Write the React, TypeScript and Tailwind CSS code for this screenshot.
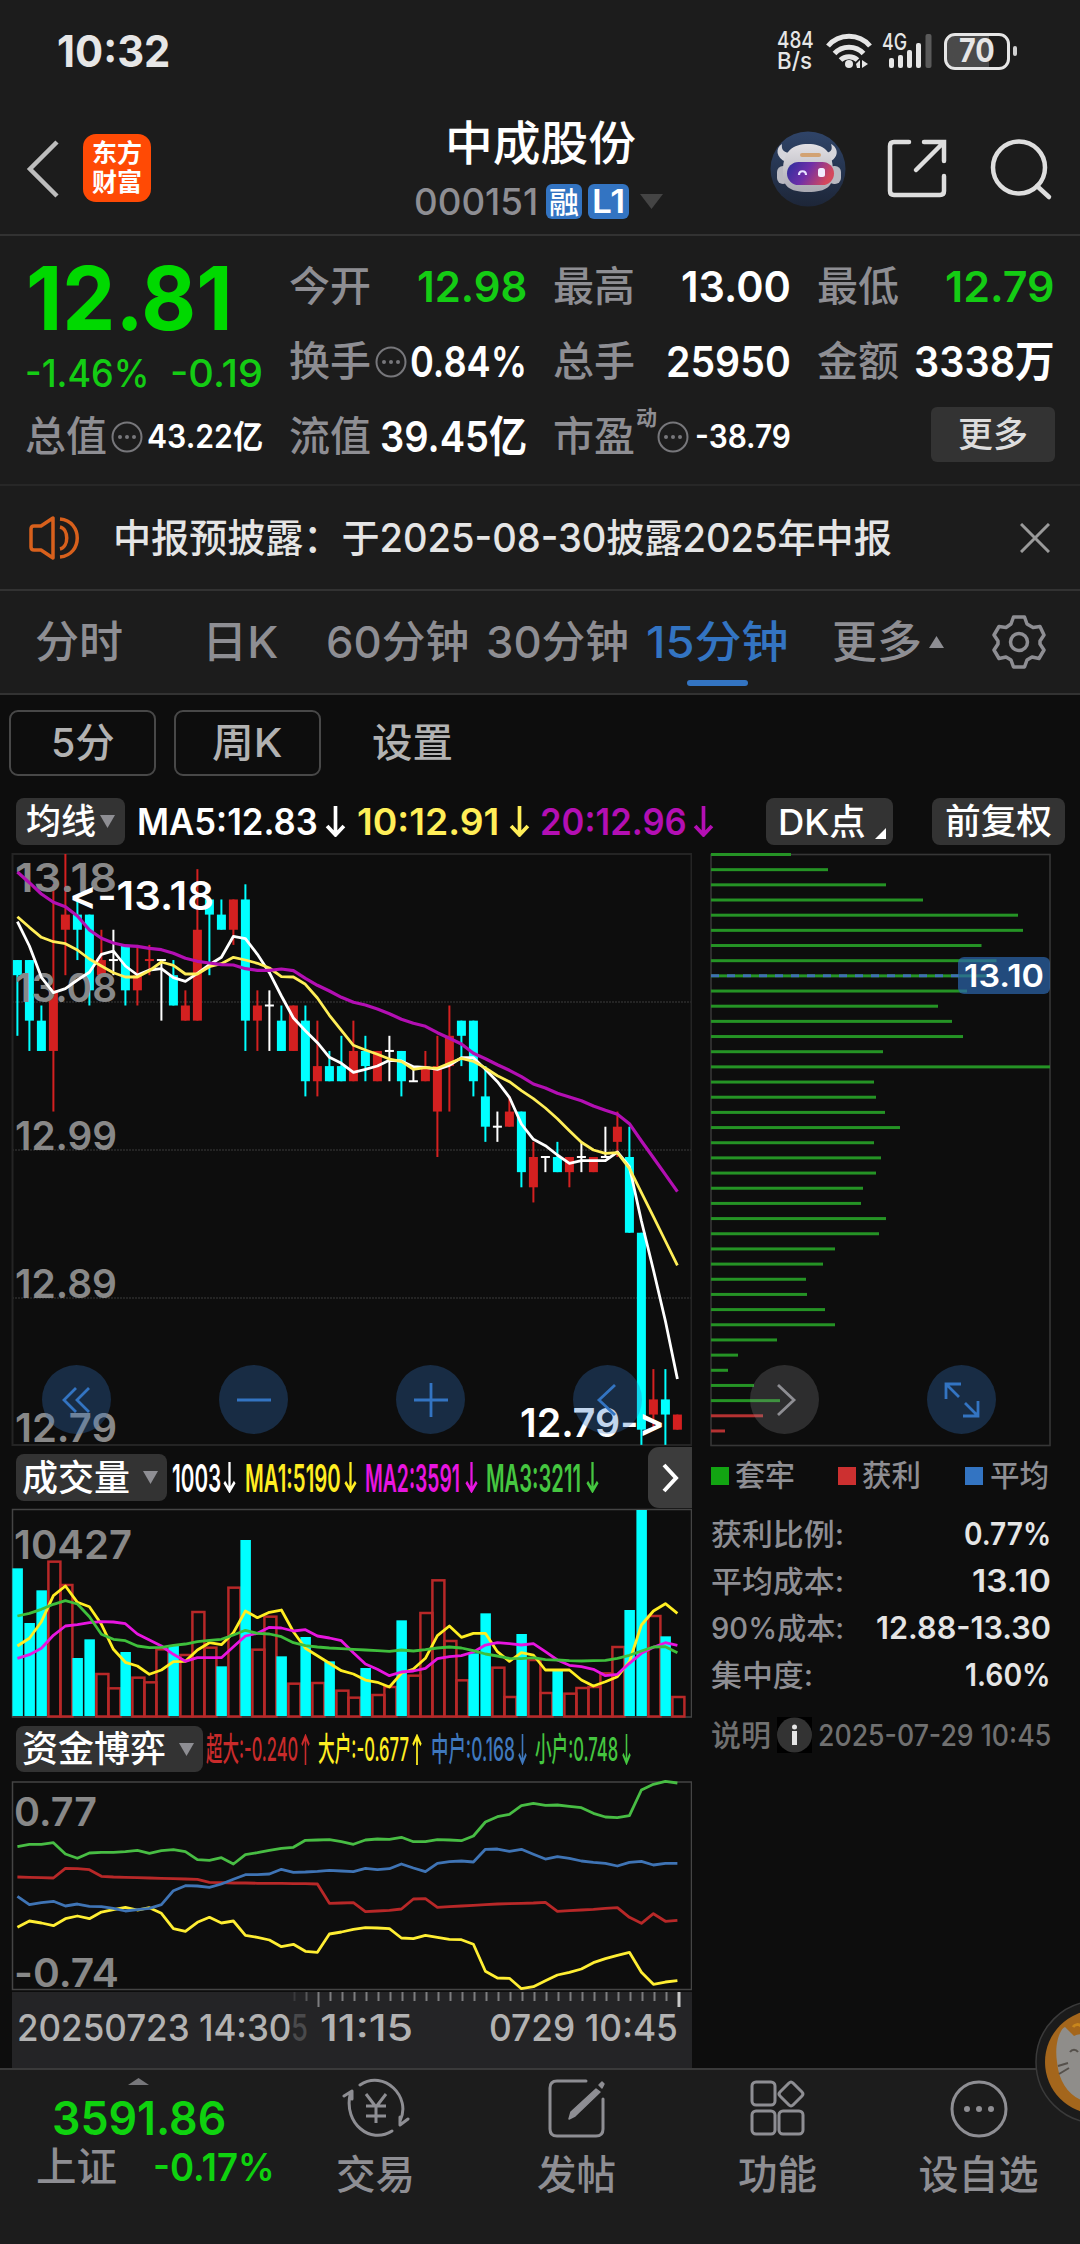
import React, { useLayoutEffect, useRef } from 'react';

interface FitProps {
  className: string;
  children: React.ReactNode;
}

// Single line of text condensed or widened to fill the width given in className
function Fit({ className, children }: FitProps) {
  const outer = useRef<HTMLSpanElement>(null);
  const inner = useRef<HTMLSpanElement>(null);

  useLayoutEffect(() => {
    if (!outer.current || !inner.current) return;
    const ratio = outer.current.clientWidth / inner.current.offsetWidth;
    inner.current.style.transform = `scaleX(${ratio})`;
  }, []);

  return (
    <span className={`block shrink-0 leading-none whitespace-nowrap ${className}`}>
      <span ref={inner} className="inline-block origin-left align-top">
        {children}
      </span>
      <span ref={outer} className="block h-0 w-full" />
    </span>
  );
}

type Candle = [string, number, number, number, number];

// colour, body top, body bottom, wick top, wick bottom (in cents below 13.18)
const candles: Candle[] = [
  ['c', 7, 8, 7, 12], ['c', 7, 11, 7, 13], ['c', 11, 13, 10, 13], ['r', 9, 13, 2, 17],
  ['r', 4, 5, 0, 8], ['c', 4, 5, 3, 7], ['c', 4, 9, 4, 10], ['r', 7, 8, 5, 8],
  ['w', 7, 7, 5, 8], ['c', 6, 9, 6, 10], ['r', 8, 9, 6, 10], ['r', 7, 7, 6, 8],
  ['w', 7, 7, 7, 11], ['c', 8, 10, 7, 10], ['r', 10, 11, 9, 11], ['r', 5, 11, 1, 11],
  ['c', 3, 4, 3, 8], ['c', 4, 5, 3, 5], ['r', 3, 5, 3, 6], ['c', 3, 11, 2, 13],
  ['r', 10, 11, 9, 13], ['w', 10, 10, 9, 13], ['c', 11, 13, 10, 13], ['r', 10, 13, 10, 13],
  ['c', 11, 15, 10, 16], ['r', 14, 15, 11, 16], ['c', 14, 15, 13, 15], ['c', 14, 15, 12, 15],
  ['r', 13, 15, 11, 15], ['c', 13, 14, 12, 15], ['r', 13, 15, 13, 15], ['w', 13, 13, 12, 15],
  ['c', 13, 15, 13, 16], ['w', 15, 15, 14, 15], ['r', 14, 15, 13, 15], ['r', 14, 17, 12, 20],
  ['r', 12, 14, 10, 17], ['c', 11, 12, 11, 14], ['c', 11, 15, 11, 16], ['c', 16, 18, 14, 19],
  ['w', 18, 18, 17, 19], ['r', 17, 18, 16, 18], ['c', 17, 21, 17, 22], ['r', 20, 22, 19, 23],
  ['w', 20, 20, 20, 21], ['c', 20, 21, 19, 21], ['r', 20, 21, 20, 22], ['w', 20, 20, 19, 21],
  ['r', 20, 21, 20, 21], ['w', 20, 20, 18, 20], ['r', 18, 19, 17, 20], ['c', 20, 25, 18, 25],
  ['c', 25, 38, 25, 39], ['r', 36, 37, 34, 38], ['c', 36, 37, 34, 39], ['r', 37, 38, 37, 38],
];

const candleColors: Record<string, string> = { c: '#00ffff', r: '#d42020', w: '#ffffff' };

const ma5 = [
  245, 318, 412, 458, 446, 420, 397, 343, 333, 378, 405, 390, 386, 413, 424, 400, 374, 352, 289, 296,
  343, 398, 468, 534, 572, 608, 652, 670, 697, 688, 678, 661, 663, 680, 682, 688, 676, 653, 653, 688,
  725, 772, 852, 898, 917, 945, 970, 962, 962, 962, 936, 980, 1143, 1290, 1443, 1617,
];
const ma10 = [
  230, 262, 292, 305, 311, 330, 357, 378, 398, 411, 411, 392, 366, 376, 402, 402, 380, 371, 352, 360,
  370, 384, 410, 411, 433, 474, 526, 571, 616, 630, 643, 657, 664, 688, 683, 685, 670, 655, 664, 684,
  707, 725, 752, 776, 804, 836, 872, 907, 930, 940, 938, 985, 1058, 1130, 1203, 1276,
];
const ma20 = [
  96, 128, 162, 187, 200, 228, 270, 295, 309, 317, 319, 325, 329, 340, 355, 364, 369, 374, 375, 386,
  391, 391, 387, 392, 415, 436, 453, 472, 487, 495, 507, 521, 538, 550, 559, 578, 595, 612, 640, 656,
  674, 691, 710, 732, 744, 760, 771, 782, 798, 811, 823, 851, 903, 953, 1004, 1055,
];

const chips = [
  80, 117, 175, 212, 307, 312, 270.5, 285.5, 277, 256, 227, 241, 252, 172, 339, 163, 165, 174, 189, 163,
  170, 165, 152, 150, 175, 168, 124, 112, 95, 96, 114, 124, 66, 27, 17, 43, 69, 52, 14,
];

const volumes: [string, number][] = [
  ['c', 385], ['c', 549], ['c', 451], ['r', 362], ['r', 432], ['c', 654], ['c', 598], ['r', 699],
  ['r', 742], ['c', 636], ['r', 710], ['r', 724], ['r', 625], ['c', 617], ['r', 642], ['r', 513],
  ['r', 620], ['c', 679], ['r', 440], ['c', 300], ['r', 626], ['r', 527], ['c', 649], ['r', 728],
  ['c', 591], ['r', 726], ['c', 664], ['r', 749], ['r', 770], ['c', 684], ['r', 762], ['r', 738],
  ['c', 541], ['r', 704], ['r', 516], ['r', 418], ['r', 600], ['r', 718], ['c', 640], ['c', 520],
  ['r', 680], ['r', 768], ['c', 582], ['r', 657], ['r', 756], ['c', 690], ['r', 758], ['r', 741],
  ['r', 738], ['r', 697], ['r', 618], ['c', 510], ['c', 210], ['r', 525], ['c', 589], ['r', 768],
];
const volMa1 = [
  618, 595, 545, 467, 438, 487, 500, 553, 628, 667, 678, 703, 690, 665, 664, 630, 608, 614, 578, 513,
  533, 517, 510, 575, 625, 647, 670, 692, 702, 720, 727, 741, 700, 687, 655, 587, 558, 592, 580, 580,
  635, 664, 638, 645, 690, 690, 690, 720, 738, 725, 710, 665, 555, 513, 491, 520,
];
const volMa2 = [
  655, 644, 625, 586, 558, 554, 548, 545, 546, 551, 582, 600, 618, 643, 664, 653, 653, 653, 620, 588,
  580, 562, 564, 573, 569, 588, 594, 602, 638, 672, 688, 707, 696, 693, 685, 656, 650, 647, 636, 615,
  608, 611, 615, 611, 635, 660, 676, 680, 688, 707, 703, 670, 640, 622, 608, 616,
];
const volMa3 = [
  528, 520, 508, 493, 482, 492, 530, 583, 598, 602, 618, 623, 622, 616, 612, 605, 601, 598, 585, 571,
  580, 582, 590, 608, 617, 621, 624, 626, 628, 630, 632, 634, 630, 633, 629, 624, 621, 624, 632, 642,
  648, 655, 656, 653, 659, 660, 662, 663, 662, 661, 655, 646, 633, 621, 620, 638,
];

const fundSmall = [
  380, 373, 373, 368, 402, 415, 399, 397, 397, 395, 391, 400, 392, 389, 395, 419, 421, 413, 432, 404,
  398, 391, 385, 382, 361, 360, 359, 365, 373, 360, 357, 358, 352, 365, 365, 359, 360, 362, 348, 306,
  290, 283, 257, 250, 256, 255, 259, 263, 280, 291, 293, 287, 210, 193, 184, 189,
];
const fundMid = [
  529, 554, 548, 544, 558, 552, 559, 560, 565, 573, 569, 565, 554, 512, 497, 498, 502, 492, 478, 464,
  464, 462, 448, 457, 456, 454, 451, 453, 455, 445, 449, 446, 432, 444, 455, 430, 425, 423, 426, 388,
  387, 394, 388, 403, 417, 410, 415, 423, 427, 430, 438, 427, 424, 435, 430, 430,
];
const fundHuge = [
  471, 472, 473, 474, 445, 446, 449, 469, 471, 472, 473, 474, 475, 476, 477, 478, 487, 488, 489, 489,
  490, 490, 490, 491, 491, 492, 550, 549, 548, 575, 573, 571, 567, 537, 536, 562, 560, 558, 556, 554,
  552, 551, 550, 549, 547, 574, 572, 570, 568, 565, 563, 592, 610, 581, 604, 601,
];
const fundBig = [
  622, 603, 609, 617, 596, 588, 596, 576, 569, 562, 570, 563, 580, 626, 634, 607, 592, 609, 603, 646,
  652, 660, 680, 673, 694, 697, 642, 636, 628, 623, 624, 626, 654, 656, 646, 652, 658, 659, 673, 754,
  774, 775, 806, 800, 782, 765, 757, 747, 728, 716, 706, 697, 757, 793, 786, 782,
];

const candleX = (i: number) => 17.4 + i * 12;
const candleY = (n: number) => 854 + n * 15.15;
const toPoints = (values: number[], base: number) =>
  values.map((v, i) => `${candleX(i).toFixed(1)},${(base + v / 3).toFixed(1)}`).join(' ');

function Line({ values, base, color, width = 2.8 }: { values: number[]; base: number; color: string; width?: number }) {
  return <polyline points={toPoints(values, base)} fill="none" stroke={color} strokeWidth={width} strokeLinejoin="round" />;
}

interface ChartLabelProps {
  x: number;
  y: number;
  w: number;
  fill?: string;
  children: string;
}

function ChartLabel({ x, y, w, fill = '#888888', children }: ChartLabelProps) {
  return (
    <text
      className="[font-feature-settings:'calt'_0]"
      x={x}
      y={y}
      textLength={w}
      lengthAdjust="spacingAndGlyphs"
      fontSize="40"
      fontWeight="600"
      fill={fill}
    >
      {children}
    </text>
  );
}

function StatusBar() {
  return (
    <div className="flex h-[102px] items-center pl-[57px] text-[#e6e6e6]">
      <Fit className="w-[113px] text-[44px] font-bold">10:32</Fit>
      <div className="ml-[607px] w-[36px] pb-[1px]">
        <Fit className="w-[37px] text-[23px] font-medium">484</Fit>
        <Fit className="-mt-[2px] w-[35px] text-[23px] font-medium">B/s</Fit>
      </div>
      <svg className="ml-[13px] h-[37px] w-[47px]" viewBox="0 0 47 37" fill="none" stroke="#e6e6e6" strokeWidth="5">
        <path d="M2 13C13 0 33 0 44 13" />
        <path d="M8.500 20.500C16 12 30 12 37.500 20.500" />
        <path d="M14.500 27C19 22.500 27 22.500 31.500 27" />
        <circle cx="23" cy="31" r="4" fill="#e6e6e6" stroke="none" />
        <path d="M30 31l4-4v8h-3zM36 27v8l6-4z" fill="#e6e6e6" stroke="none" />
      </svg>
      <svg className="ml-[9px] h-[37px] w-[51px] overflow-visible" viewBox="0 0 51 37" fill="#e6e6e6">
        <text x="0" y="17" fontSize="23" fontWeight="500" textLength="25" lengthAdjust="spacingAndGlyphs">4G</text>
        <rect x="7" y="25" width="5" height="10" rx="2" />
        <rect x="16" y="22" width="5" height="13" rx="2" />
        <rect x="25" y="17" width="5" height="18" rx="2" />
        <rect x="34" y="10" width="5" height="25" rx="2" />
        <rect x="43.500" y="1" width="6" height="34" rx="2" fill="#5a5a5a" />
      </svg>
      <div className="ml-[11px] flex h-[37px] w-[66px] items-center justify-center rounded-[11px] border-[3px] border-[#e6e6e6] bg-linear-to-r from-[#4a4a4a] from-70% to-[#1c1c1c] to-70%">
        <Fit className="w-[36px] text-[32px] font-bold">70</Fit>
      </div>
      <div className="ml-[3px] h-[10px] w-[4px] rounded-full bg-[#d0d0d0]" />
    </div>
  );
}

function Robot() {
  return (
    <svg className="h-[76px] w-[76px]" viewBox="0 0 76 76">
      <defs>
        <linearGradient id="disc" x1="0" y1="0" x2="0" y2="1">
          <stop offset="0" stopColor="#2f4468" />
          <stop offset="1" stopColor="#1d2638" />
        </linearGradient>
        <linearGradient id="visor" x1="0" y1="0" x2="1" y2="0.300">
          <stop offset="0" stopColor="#2b2f9c" />
          <stop offset="0.500" stopColor="#6f2fa8" />
          <stop offset="1" stopColor="#d4485c" />
        </linearGradient>
        <linearGradient id="shell" x1="0" y1="0" x2="0" y2="1">
          <stop offset="0" stopColor="#e2e0e4" />
          <stop offset="1" stopColor="#a9a9b2" />
        </linearGradient>
      </defs>
      <circle cx="38" cy="38" r="37.500" fill="url(#disc)" />
      <rect x="7" y="35" width="12" height="18" rx="6" fill="#b9b9c1" />
      <rect x="58" y="35" width="13" height="18" rx="6" fill="#b9b9c1" />
      <path d="M12 13C5 17 6 27 16 31L22 22C14 22 11 19 12 13zM61 13C69 17 69 27 59 31L53 22C61 22 63 19 61 13z" fill="#d5d5db" />
      <path d="M13 40C13 20 23 13 38 13S63 20 63 40C64 55 57 61 38 61S12 55 13 40z" fill="url(#shell)" />
      <rect x="17" y="31" width="47" height="23" rx="11.500" fill="url(#visor)" />
      <rect x="30" y="22" width="21" height="4" rx="2" fill="#d2a273" />
      <path d="M29 44C29 39 36 39 36 44" fill="none" stroke="#e8e4ff" strokeWidth="2.200" />
      <rect x="48" y="37" width="7" height="9" rx="2.500" fill="#f2ecff" />
    </svg>
  );
}

function Header() {
  return (
    <header className="flex h-[134px] items-start border-b-2 border-[#323232] pl-[26px]">
      <svg className="mt-[38px] h-[58px] w-[34px]" viewBox="0 0 34 58" fill="none" stroke="#bdbdbd" strokeWidth="4.500">
        <path d="M31 2L4 29L31 56" />
      </svg>
      <div className="mt-[32px] ml-[23px] flex h-[68px] w-[68px] flex-col items-center justify-center rounded-[13px] bg-[#ff4a05] text-[25px] leading-[29px] font-bold text-white">
        <span>东方</span>
        <span>财富</span>
      </div>
      <div className="ml-[263px] w-[250px] pt-[17px]">
        <Fit className="ml-[31px] w-[191px] text-[47px] font-medium text-white">中成股份</Fit>
        <div className="mt-[17px] flex h-[37px] items-center">
          <Fit className="w-[124px] text-[37px] text-[#8e8e93]">000151</Fit>
          <span className="ml-[8px] flex h-[35px] w-[36px] items-center justify-center rounded-[6px] bg-[#3374c2]">
            <Fit className="w-[30px] text-[30px] font-medium text-white">融</Fit>
          </span>
          <span className="ml-[6px] flex h-[35px] w-[41px] items-center justify-center rounded-[6px] bg-[#3374c2]">
            <Fit className="w-[33px] text-[32px] font-semibold text-white">L1</Fit>
          </span>
          <svg className="ml-[11px] h-[15px] w-[23px]" viewBox="0 0 23 15" fill="#444444">
            <path d="M0 0H23L11.500 15z" />
          </svg>
        </div>
      </div>
      <div className="mt-[29px] ml-[106px]">
        <Robot />
      </div>
      <svg className="mt-[37px] ml-[41px] h-[60px] w-[60px]" viewBox="0 0 60 60" fill="none" stroke="#dedede" strokeWidth="4.500" strokeLinecap="round">
        <path d="M22 3H7Q3 3 3 7V52Q3 56 7 56H53Q57 56 57 52V37" />
        <path d="M37 3H57V22M55 5L29 31" />
      </svg>
      <svg className="mt-[37px] ml-[43px] h-[62px] w-[64px]" viewBox="0 0 64 62" fill="none" stroke="#dedede" strokeWidth="4.500" strokeLinecap="round">
        <circle cx="29" cy="28.500" r="26" />
        <path d="M47 47L59 58" />
      </svg>
    </header>
  );
}

function Dots() {
  return (
    <svg className="h-[32px] w-[32px] shrink-0" viewBox="0 0 32 32" fill="#77777b">
      <circle cx="16" cy="16" r="14.500" fill="none" stroke="#77777b" strokeWidth="2" />
      <circle cx="9" cy="16" r="2" />
      <circle cx="16" cy="16" r="2" />
      <circle cx="23" cy="16" r="2" />
    </svg>
  );
}

function Cell({ children }: { children: React.ReactNode }) {
  return <div className="flex h-[75px] items-center justify-between text-[43px] font-semibold text-white">{children}</div>;
}

function Label({ children }: { children: React.ReactNode }) {
  return <Fit className="w-[82px] text-[41px] font-medium text-[#8e8e93]">{children}</Fit>;
}

function Quote() {
  return (
    <section className="grid h-[250px] grid-cols-[238px_238px_238px_238px] gap-x-[26px] border-b-2 border-[#272727] pt-[13px] pl-[25px]">
      <div>
        <div className="flex h-[97px] items-center pl-[1px]">
          <Fit className="w-[207px] text-[88px] font-bold text-[#00d900]">12.81</Fit>
        </div>
        <div className="flex h-[53px] items-center justify-between text-[38px] text-[#14cc14]">
          <Fit className="w-[124px]">-1.46%</Fit>
          <Fit className="w-[93px]">-0.19</Fit>
        </div>
        <Cell>
          <Label>总值</Label>
          <Dots />
          <Fit className="w-[116px] text-[32px]">43.22亿</Fit>
        </Cell>
      </div>
      <div>
        <Cell>
          <Label>今开</Label>
          <Fit className="w-[110px] text-[#14cc14]">12.98</Fit>
        </Cell>
        <Cell>
          <Label>换手</Label>
          <Dots />
          <Fit className="w-[117px]">0.84%</Fit>
        </Cell>
        <Cell>
          <Label>流值</Label>
          <Fit className="w-[147px]">39.45亿</Fit>
        </Cell>
      </div>
      <div>
        <Cell>
          <Label>最高</Label>
          <Fit className="w-[110px]">13.00</Fit>
        </Cell>
        <Cell>
          <Label>总手</Label>
          <Fit className="w-[125px]">25950</Fit>
        </Cell>
        <Cell>
          <div className="flex items-center">
            <Label>市盈</Label>
            <Fit className="mb-[38px] ml-[1px] w-[21px] text-[21px] text-[#8e8e93]">动</Fit>
            <Dots />
          </div>
          <Fit className="w-[96px] text-[32px]">-38.79</Fit>
        </Cell>
      </div>
      <div>
        <Cell>
          <Label>最低</Label>
          <Fit className="w-[110px] text-[#14cc14]">12.79</Fit>
        </Cell>
        <Cell>
          <Label>金额</Label>
          <Fit className="w-[141px]">3338万</Fit>
        </Cell>
        <div className="mt-[8px] ml-auto flex h-[55px] w-[124px] items-center justify-center rounded-[6px] bg-[#333333]">
          <Fit className="w-[70px] text-[35px] font-medium text-[#dddddd]">更多</Fit>
        </div>
      </div>
    </section>
  );
}

function Notice() {
  return (
    <section className="flex h-[105px] items-center border-b-2 border-[#323232] pl-[29px]">
      <svg className="h-[44px] w-[52px]" viewBox="0 0 52 44" fill="none" stroke="#d8601c" strokeWidth="3.500" strokeLinejoin="round">
        <path d="M24 2V42L12 34H5Q2 34 2 31V13Q2 10 5 10H12z" />
        <path d="M31 11C40 13 40 31 31 33" />
        <path d="M31 3C54 5 54 39 31 41" />
      </svg>
      <Fit className="ml-[32px] w-[779px] text-[39px] font-medium text-[#e5e5e5]">中报预披露：于2025-08-30披露2025年中报</Fit>
      <svg className="ml-[128px] h-[30px] w-[30px]" viewBox="0 0 30 30" stroke="#9a9a9a" strokeWidth="3">
        <path d="M1 1L29 29M29 1L1 29" />
      </svg>
    </section>
  );
}

function Gear() {
  return (
    <svg className="h-[54px] w-[54px]" viewBox="0 0 54 54" fill="none" stroke="#8e8e93" strokeWidth="3.500" strokeLinejoin="round">
      <path d="M21.500 2H32.500L35 9L41 12.500L48 11.500L52 20L48 26V29L52 35L47 43.500L40 42L35 45L32.500 52H21.500L19 45L14 42L7 43.500L2 35L6 29V26L2 20L7 11.500L14 12.500L19 9z" />
      <circle cx="27" cy="27" r="8.500" />
    </svg>
  );
}

function Tabs() {
  return (
    <nav className="flex h-[104px] items-center border-b-2 border-[#323232] pl-[35px] text-[44px] text-[#8e8e93]">
      <Fit className="w-[88px]">分时</Fit>
      <Fit className="ml-[79px] w-[76px]">日K</Fit>
      <Fit className="ml-[48px] w-[143px]">60分钟</Fit>
      <Fit className="ml-[17px] w-[143px]">30分钟</Fit>
      <div className="relative ml-[17px] text-[#3374c2]">
        <Fit className="w-[142px]">15分钟</Fit>
        <span className="absolute top-[60px] left-[41px] h-[6px] w-[61px] rounded-full bg-[#3374c2]" />
      </div>
      <Fit className="ml-[44px] w-[90px]">更多</Fit>
      <svg className="ml-[7px] h-[12px] w-[15px]" viewBox="0 0 15 12" fill="#8e8e93">
        <path d="M0 12H15L7.500 0z" />
      </svg>
      <div className="ml-[48px]">
        <Gear />
      </div>
    </nav>
  );
}

function Periods() {
  return (
    <div className="flex items-center pt-[15px] pl-[9px] text-[40px] text-[#b2b2b2]">
      <div className="flex h-[66px] w-[147px] items-center justify-center rounded-[9px] border-2 border-[#484848]">
        <Fit className="w-[64px]">5分</Fit>
      </div>
      <div className="ml-[18px] flex h-[66px] w-[147px] items-center justify-center rounded-[9px] border-2 border-[#484848]">
        <Fit className="w-[71px]">周K</Fit>
      </div>
      <Fit className="ml-[51px] w-[81px]">设置</Fit>
    </div>
  );
}

function Down({ className }: { className: string }) {
  return (
    <svg className={`h-[13px] w-[15px] ${className}`} viewBox="0 0 15 13" fill="#8e8e93">
      <path d="M0 0H15L7.500 13z" />
    </svg>
  );
}

// Thin arrow behind every indicator value
function Arrow({ up = false, className }: { up?: boolean; className: string }) {
  return (
    <svg className={`h-[31px] ${className}`} viewBox="0 0 20 31" preserveAspectRatio="none" fill="none" stroke="currentColor" strokeWidth="3.500">
      {up ? <path d="M10 31V2M2 11L10 2L18 11" /> : <path d="M10 0V29M2 20L10 29L18 20" />}
    </svg>
  );
}

function MaRow() {
  return (
    <div className="mt-[22px] flex h-[47px] items-center pl-[16px] text-[37px] font-semibold">
      <div className="flex h-[47px] w-[109px] items-center rounded-[8px] bg-[#333333] pl-[10px]">
        <Fit className="w-[70px] text-[35px] font-medium text-white">均线</Fit>
        <Down className="ml-[4px]" />
      </div>
      <Fit className="ml-[12px] w-[181px] text-white">MA5:12.83</Fit>
      <Arrow className="ml-[7px] w-[21px] text-white" />
      <Fit className="ml-[11px] w-[142px] text-[#ffee58]">10:12.91</Fit>
      <Arrow className="ml-[10px] w-[21px] text-[#ffee58]" />
      <Fit className="ml-[10px] w-[147px] text-[#b30fb3]">20:12.96</Fit>
      <Arrow className="ml-[6px] w-[21px] text-[#b30fb3]" />
      <div className="ml-[52px] flex h-[47px] w-[127px] items-center rounded-[8px] bg-[#333333] pl-[12px] text-white">
        <Fit className="w-[88px] text-[36px] font-medium">DK点</Fit>
        <svg className="mt-[24px] ml-[9px] h-[11px] w-[11px]" viewBox="0 0 11 11" fill="#ffffff">
          <path d="M11 0V11H0z" />
        </svg>
      </div>
      <div className="ml-[39px] flex h-[47px] w-[133px] items-center justify-center rounded-[8px] bg-[#333333]">
        <Fit className="w-[107px] text-[35px] font-medium text-white">前复权</Fit>
      </div>
    </div>
  );
}

function CircleButton({ gray = false, d }: { gray?: boolean; d: string }) {
  return (
    <span className={`flex h-[69px] w-[69px] shrink-0 items-center justify-center rounded-full ${gray ? 'bg-[#8e8e93]/25' : 'bg-[#3374c2]/30'}`}>
      <svg className="h-[36px] w-[36px]" viewBox="0 0 36 36" fill="none" stroke={gray ? '#8e8e93' : '#3374c2'} strokeWidth="2.800">
        <path d={d} />
      </svg>
    </span>
  );
}

function CandleChart() {
  return (
    <svg className="h-[594px] w-[692px]" viewBox="0 853 692 594">
      <rect x="12.500" y="854" width="679" height="591" fill="none" stroke="#242424" strokeWidth="2" />
      {[1002, 1150, 1298].map((y) => (
        <path key={y} d={`M12 ${y}H692`} stroke="#242424" strokeWidth="2" strokeDasharray="2 1" />
      ))}
      {candles.map(([kind, top, bottom, high, low], i) => {
        const x = candleX(i);
        const color = candleColors[kind];
        const flat = top === bottom;
        return (
          <g key={i} fill={color}>
            <rect x={x - 1} y={candleY(high)} width="2" height={(low - high) * 15.15} />
            <rect
              x={x - 4.5}
              y={flat ? candleY(top) - 1 : candleY(top)}
              width="9"
              height={flat ? 2 : (bottom - top) * 15.15}
            />
          </g>
        );
      })}
      <ChartLabel x={15} y={892} w={102}>13.18</ChartLabel>
      <ChartLabel x={15} y={1002} w={102}>13.08</ChartLabel>
      <ChartLabel x={15} y={1150} w={102}>12.99</ChartLabel>
      <ChartLabel x={15} y={1298} w={102}>12.89</ChartLabel>
      <ChartLabel x={15} y={1442} w={102}>12.79</ChartLabel>
      <Line values={ma5} base={840} color="#ffffff" />
      <Line values={ma10} base={840} color="#ffee58" />
      <Line values={ma20} base={840} color="#b30fb3" width={3.2} />
      <ChartLabel x={69} y={910} w={145} fill="#ffffff">{'<-13.18'}</ChartLabel>
      <ChartLabel x={520} y={1437} w={145} fill="#ffffff">{'12.79->'}</ChartLabel>
    </svg>
  );
}

function ChipChart() {
  return (
    <svg className="h-[594px] w-[342px]" viewBox="710 853 342 594">
      <rect x="711" y="854.500" width="339" height="591" fill="none" stroke="#363636" strokeWidth="1.600" />
      {chips.map((w, i) => (
        <rect key={i} x="711" y={853 + i * 15.17} width={w} height="3" fill={i > 36 ? '#b53232' : '#259325'} />
      ))}
      <path d="M711 975.800H960" stroke="#3f6fb4" strokeWidth="3" strokeDasharray="8 8" />
      <rect x="958" y="957" width="92" height="37" rx="6" fill="#2c66ae" fillOpacity="0.700" />
      <text x="964" y="986.500" textLength="80" lengthAdjust="spacingAndGlyphs" fontSize="31" fontWeight="600" fill="#ffffff">
        13.10
      </text>
    </svg>
  );
}

function Charts() {
  return (
    <div className="relative mt-[8px] flex h-[594px]">
      <CandleChart />
      <div className="ml-[18px]">
        <ChipChart />
      </div>
      <div className="absolute top-[512px] left-[42px] flex gap-[108px]">
        <CircleButton d="M17 6L5 18L17 30M30 6L18 18L30 30" />
        <CircleButton d="M1 18H35" />
        <CircleButton d="M1 18H35M18 1V35" />
        <CircleButton d="M25 3L9 18L25 33" />
        <CircleButton gray d="M11 3L27 18L11 33" />
        <CircleButton d="M17 2H2V17M3 3L15 15M19 34H34V19M33 33L21 21" />
      </div>
    </div>
  );
}

function VolumeHeader() {
  return (
    <div className="flex h-[61px] items-center pl-[16px] text-[38px]">
      <div className="flex h-[47px] w-[151px] items-center rounded-[8px] bg-[#333333] pl-[6px]">
        <Fit className="w-[108px] text-[36px] font-medium text-white">成交量</Fit>
        <Down className="ml-[13px]" />
      </div>
      <Fit className="ml-[5px] w-[49px] font-semibold text-white">1003</Fit>
      <Arrow className="ml-[2px] w-[13px] text-white" />
      <Fit className="ml-[9px] w-[96px] font-semibold text-[#ffee22]">MA1:5190</Fit>
      <Arrow className="ml-[3px] w-[13px] text-[#ffee22]" />
      <Fit className="ml-[8px] w-[95px] font-semibold text-[#e815e0]">MA2:3591</Fit>
      <Arrow className="ml-[5px] w-[13px] text-[#e815e0]" />
      <Fit className="ml-[8px] w-[95px] font-semibold text-[#45c640]">MA3:3211</Fit>
      <Arrow className="ml-[5px] w-[13px] text-[#45c640]" />
      <div className="ml-auto flex h-[61px] w-[44px] items-center justify-center rounded-l-[11px] bg-[#3c3c3c]">
        <svg className="h-[30px] w-[18px]" viewBox="0 0 18 30" fill="none" stroke="#ffffff" strokeWidth="4">
          <path d="M3 2L15 15L3 28" />
        </svg>
      </div>
    </div>
  );
}

function VolumeChart() {
  return (
    <svg className="h-[210px] w-[692px]" viewBox="0 1508 692 210">
      <rect x="12.500" y="1509.500" width="679" height="207.500" fill="none" stroke="#444444" strokeWidth="1.500" />
      <ChartLabel x={14} y={1559} w={118}>10427</ChartLabel>
      {volumes.map(([kind, v], i) => {
        const x = candleX(i);
        const y = 1440 + v / 3;
        return kind === 'c' ? (
          <rect key={i} x={x - 5} y={y} width="10.5" height={1716 - y} fill="#00ffff" />
        ) : (
          <rect key={i} x={x - 5} y={y + 1} width="12" height={1715.5 - y} fill="none" stroke="#b82828" strokeWidth="2.500" />
        );
      })}
      <Line values={volMa1} base={1440} color="#ffee22" />
      <Line values={volMa2} base={1440} color="#e815e0" />
      <Line values={volMa3} base={1440} color="#3fbf3c" />
    </svg>
  );
}

function FundHeader() {
  return (
    <div className="mt-[8px] flex h-[46px] items-center pl-[16px] text-[33px]">
      <div className="flex h-[46px] w-[187px] items-center rounded-[8px] bg-[#333333] pl-[6px]">
        <Fit className="w-[144px] text-[36px] text-white">资金博弈</Fit>
        <Down className="ml-[13px]" />
      </div>
      <Fit className="ml-[3px] w-[92px] text-[#c92b2b]">超大:-0.240</Fit>
      <Arrow up className="ml-[3px] w-[9px] text-[#c92b2b]" />
      <Fit className="ml-[8px] w-[91px] text-[#ffee22]">大户:-0.677</Fit>
      <Arrow up className="ml-[3px] w-[10px] text-[#ffee22]" />
      <Fit className="ml-[9px] w-[84px] text-[#3f78bd]">中户:0.168</Fit>
      <Arrow className="ml-[3px] w-[9px] text-[#3f78bd]" />
      <Fit className="ml-[8px] w-[83px] text-[#45c640]">小户:0.748</Fit>
      <Arrow className="ml-[4px] w-[9px] text-[#45c640]" />
    </div>
  );
}

function FundChart() {
  return (
    <svg className="mt-[7px] h-[212px] w-[692px]" viewBox="0 1779 692 212">
      <rect x="12.500" y="1782" width="679" height="207.500" fill="none" stroke="#444444" strokeWidth="1.500" />
      <ChartLabel x={14} y={1826} w={83}>0.77</ChartLabel>
      <ChartLabel x={14} y={1987} w={105}>-0.74</ChartLabel>
      <Line values={fundHuge} base={1720} color="#b82828" />
      <Line values={fundBig} base={1720} color="#ffee33" />
      <Line values={fundMid} base={1720} color="#3f74b5" />
      <Line values={fundSmall} base={1720} color="#48bd44" />
    </svg>
  );
}

function TimeAxis() {
  const ticks = Array.from({ length: 33 }, (_, i) => i);
  return (
    <div className="mt-[1px] ml-[12px] h-[76px] w-[680px] bg-[#242426] text-[37px] text-[#b2b2b2]">
      <svg className="block h-[16px] w-[680px]" viewBox="0 0 680 16">
        {ticks.map((i) => (
          <rect
            key={i}
            x={281.5 + i * 12}
            y="0"
            width={i === 32 ? 3 : 2}
            height={i === 2 || i === 32 ? 15 : 9}
            fill={i === 32 ? '#c8c8c8' : '#7d7d7f'}
            fillOpacity={i < 2 ? 0.25 + i * 0.3 : 1}
          />
        ))}
      </svg>
      <div className="flex pt-[1px] pl-[5px]">
        <Fit className="w-[274px]">20250723 14:30</Fit>
        <Fit className="w-[17px] text-[#4a4a4c]">5</Fit>
        <Fit className="ml-[12px] w-[93px]">11:15</Fit>
        <Fit className="ml-[76px] w-[189px]">0729 10:45</Fit>
      </div>
    </div>
  );
}

function Stat({ label, labelClass, value, valueClass }: { label: string; labelClass: string; value: string; valueClass: string }) {
  return (
    <div className="flex h-[47px] items-center justify-between">
      <Fit className={`text-[30px] text-[#8e8e93] ${labelClass}`}>{label}</Fit>
      <Fit className={`text-[31px] font-semibold text-[#e5e5e5] ${valueClass}`}>{value}</Fit>
    </div>
  );
}

function ChipInfo() {
  return (
    <aside className="ml-[19px] w-[340px]">
      <div className="flex h-[58px] items-center text-[29.500px] text-[#8e8e93]">
        <span className="h-[18px] w-[18px] bg-[#12a412]" />
        <Fit className="ml-[6px] w-[60px]">套牢</Fit>
        <span className="ml-[43px] h-[18px] w-[18px] bg-[#cc3030]" />
        <Fit className="ml-[6px] w-[59px]">获利</Fit>
        <span className="ml-[44px] h-[18px] w-[18px] bg-[#3374c2]" />
        <Fit className="ml-[7px] w-[59px]">平均</Fit>
      </div>
      <div className="mt-[5px]">
        <Stat label="获利比例:" labelClass="w-[133px]" value="0.77%" valueClass="w-[87px]" />
        <Stat label="平均成本:" labelClass="w-[133px]" value="13.10" valueClass="w-[79px]" />
        <Stat label="90%成本:" labelClass="w-[133px]" value="12.88-13.30" valueClass="w-[175px]" />
        <Stat label="集中度:" labelClass="w-[102px]" value="1.60%" valueClass="w-[86px]" />
      </div>
      <div className="mt-[19px] flex h-[36px] items-center text-[30px] text-[#707070]">
        <Fit className="w-[60px]">说明</Fit>
        <svg className="ml-[6px] h-[36px] w-[35px] bg-black" viewBox="0 0 35 36">
          <circle cx="17.500" cy="18" r="17.500" fill="#333333" />
          <rect x="15" y="14" width="5" height="14" fill="#e5e5e5" />
          <circle cx="17.500" cy="10" r="2.500" fill="#e5e5e5" />
        </svg>
        <Fit className="ml-[6px] w-[233px]">2025-07-29 10:45</Fit>
      </div>
    </aside>
  );
}

function NavItem({ label, className, children }: { label: string; className: string; children: React.ReactNode }) {
  return (
    <div className="flex w-[201px] flex-col items-center pt-[7px]">
      <svg className="h-[62px] w-[68px]" viewBox="0 0 68 62" fill="none" stroke="#8e8e93" strokeWidth="3" strokeLinecap="round" strokeLinejoin="round">
        {children}
      </svg>
      <Fit className={`mt-[16px] text-[40px] text-[#8e8e93] ${className}`}>{label}</Fit>
    </div>
  );
}

function BottomBar() {
  return (
    <footer className="relative flex h-[176px] border-t-2 border-[#3a3a3a] bg-[#1c1c1c]">
      <div className="w-[275px]">
        <svg className="mt-[8px] ml-[128px] h-[7px] w-[21px]" viewBox="0 0 21 7" fill="#77777b">
          <path d="M0 7H21L10.500 0z" />
        </svg>
        <Fit className="mt-[9px] ml-[52px] w-[174px] text-[47px] font-semibold text-[#0fd20f]">3591.86</Fit>
        <div className="mt-[6px] flex items-center">
          <Fit className="ml-[36px] w-[81px] text-[40px] text-[#8e8e93]">上证</Fit>
          <Fit className="ml-[36px] w-[122px] text-[38px] font-semibold text-[#0fd20f]">-0.17%</Fit>
        </div>
      </div>
      <NavItem label="交易" className="w-[79px]">
        <path d="M18 8C42 -8 70 20 58 44M50 54C28 68 2 46 8 18M2 19L10 14V22M66 42L58 48V40" />
        <path d="M24 17L34 30L44 17M24 29H44M24 39H44M34 30V46" strokeLinecap="butt" />
      </NavItem>
      <NavItem label="发帖" className="w-[79px]">
        <path d="M43 4H14Q7 4 7 11V52Q7 59 14 59H53Q60 59 60 52V22" />
        <path d="M53 12L57 15L32 39L26 42L28 35zM56 8L59 5L61 7L59 11z" fill="#8e8e93" strokeWidth="1.500" />
      </NavItem>
      <NavItem label="功能" className="w-[79px]">
        <rect x="8" y="5" width="23" height="23" rx="4" />
        <rect x="8" y="34" width="23" height="23" rx="4" />
        <rect x="35" y="34" width="24" height="23" rx="4" />
        <path d="M45 6Q47 4 49 6L58 15Q60 17 58 19L49 28Q47 30 45 28L36 19Q34 17 36 15z" />
      </NavItem>
      <NavItem label="设自选" className="w-[120px]">
        <circle cx="34" cy="32" r="27" />
        <g fill="#8e8e93" stroke="none">
          <circle cx="22" cy="32" r="3" />
          <circle cx="34" cy="32" r="3" />
          <circle cx="46" cy="32" r="3" />
        </g>
      </NavItem>
      {/* floating mascot, half off the right edge */}
      <svg className="absolute -top-[70px] left-[1033px] h-[126px] w-[47px]" viewBox="0 0 47 126">
        <circle cx="64" cy="62" r="61" fill="#1b1b1b" stroke="#3a3a3a" strokeWidth="1.500" />
        <circle cx="64" cy="62" r="52" fill="#a4661c" />
        <path d="M24 62C21 42 28 28 32 27L41 36C45 34 50 34 54 34V102C38 98 26 84 24 62z" fill="#8f8d8a" />
        <path d="M25 66L35 63M26 74L36 68M37 52C39 49 43 49 45 52" fill="none" stroke="#55504b" strokeWidth="2" />
        <path d="M40 27C42 24 46 24 48 26" fill="none" stroke="#c8861c" strokeWidth="3" />
      </svg>
    </footer>
  );
}

export default function App() {
  return (
    <div className="h-[2244px] w-[1080px] overflow-hidden bg-[#0d0d0d] font-['Inter','Noto_Sans_CJK_SC',sans-serif] font-medium">
      <div className="bg-[#1c1c1c]">
        <StatusBar />
        <Header />
        <Quote />
        <Notice />
        <Tabs />
      </div>
      <Periods />
      <MaRow />
      <Charts />
      <div className="flex h-[621px]">
        <div className="w-[692px]">
          <VolumeHeader />
          <VolumeChart />
          <FundHeader />
          <FundChart />
          <TimeAxis />
        </div>
        <ChipInfo />
      </div>
      <BottomBar />
    </div>
  );
}
